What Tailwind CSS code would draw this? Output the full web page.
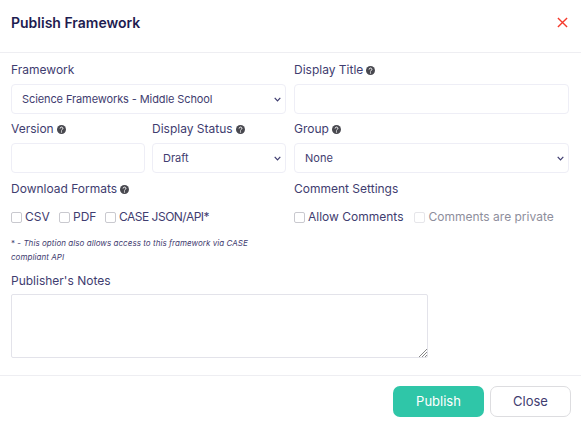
<!doctype html>
<html><head><meta charset="utf-8">
<script src="https://cdn.jsdelivr.net/npm/@tailwindcss/browser@4"></script></head>
<body class="bg-white font-['Inter',sans-serif] text-[#3f3d70] text-[12px] w-[581px] h-[422px] overflow-hidden">
<header class="h-[53px] border-b border-[#eeeef2] flex items-center justify-between pl-[11px] pr-[13px] pb-[7px]">
  <h1 class="text-[14px] font-semibold text-[#1e1c50]">Publish Framework</h1>
  <svg class="w-[11px] h-[11px]" viewBox="0 0 12 12" fill="none" stroke="#f5392b" stroke-width="1.5"><path d="M1 1l10 10M11 1L1 11"/></svg>
</header>
<main class="pl-[11px] pr-[12px] pt-[10px]">
  <div class="grid grid-cols-2 gap-x-[8px]">
    <div>
      <label class="block h-[21px] leading-[14px]">Framework</label>
      <div class="relative h-[30px] border border-[#eeeef6] rounded-[4px] flex items-center pl-[10px] text-[11px] tracking-[-0.1px]">Science Frameworks - Middle School
        <svg class="absolute right-[4px] top-[12px] w-[7px] h-[5px]" viewBox="0 0 7 5" fill="none" stroke="#3f3d70" stroke-width="1.2"><path d="M.7.8l2.8 3 2.8-3"/></svg></div>
    </div>
    <div>
      <label class="flex items-center gap-[3px] h-[21px] leading-[14px] pb-[7px]">Display Title
        <svg class="w-[9px] h-[9px]" viewBox="0 0 9 9"><circle cx="4.5" cy="4.5" r="4.5" fill="#48484f"/><path d="M3.1 3.5c0-1.900 2.800-1.900 2.800-.1 0 1.200-1.400 1-1.400 2.100" fill="none" stroke="#fff" stroke-width="1"/><circle cx="4.5" cy="6.900" r=".6" fill="#fff"/></svg></label>
      <div class="h-[30px] border border-[#eeeef6] rounded-[4px]"></div>
    </div>
    <div class="grid grid-cols-2 gap-x-[7px] mt-[8px]">
      <div>
        <label class="flex items-center gap-[3px] h-[21px] leading-[14px] pb-[7px]">Version
          <svg class="w-[9px] h-[9px]" viewBox="0 0 9 9"><circle cx="4.5" cy="4.5" r="4.5" fill="#48484f"/><path d="M3.1 3.500c0-1.900 2.800-1.900 2.800-.1 0 1.200-1.400 1-1.400 2.100" fill="none" stroke="#fff" stroke-width="1"/><circle cx="4.500" cy="6.900" r=".6" fill="#fff"/></svg></label>
        <div class="h-[30px] border border-[#eeeef6] rounded-[4px]"></div>
      </div>
      <div>
        <label class="flex items-center gap-[3px] h-[21px] leading-[14px] pb-[7px]">Display Status
          <svg class="w-[9px] h-[9px]" viewBox="0 0 9 9"><circle cx="4.5" cy="4.5" r="4.5" fill="#48484f"/><path d="M3.1 3.500c0-1.900 2.800-1.900 2.800-.1 0 1.200-1.400 1-1.400 2.100" fill="none" stroke="#fff" stroke-width="1"/><circle cx="4.500" cy="6.900" r=".6" fill="#fff"/></svg></label>
        <div class="relative h-[30px] border border-[#eeeef6] rounded-[4px] flex items-center pl-[10px] text-[11px]">Draft
          <svg class="absolute right-[4px] top-[12px] w-[7px] h-[5px]" viewBox="0 0 7 5" fill="none" stroke="#3f3d70" stroke-width="1.2"><path d="M.7.8l2.800 3 2.800-3"/></svg></div>
      </div>
    </div>
    <div class="mt-[8px]">
      <label class="flex items-center gap-[3px] h-[21px] leading-[14px] pb-[7px]">Group
        <svg class="w-[9px] h-[9px]" viewBox="0 0 9 9"><circle cx="4.5" cy="4.5" r="4.5" fill="#48484f"/><path d="M3.1 3.500c0-1.900 2.800-1.900 2.800-.1 0 1.200-1.400 1-1.400 2.100" fill="none" stroke="#fff" stroke-width="1"/><circle cx="4.500" cy="6.900" r=".6" fill="#fff"/></svg></label>
      <div class="relative h-[30px] border border-[#eeeef6] rounded-[4px] flex items-center pl-[10px] text-[11px]">None
        <svg class="absolute right-[4px] top-[12px] w-[7px] h-[5px]" viewBox="0 0 7 5" fill="none" stroke="#3f3d70" stroke-width="1.2"><path d="M.7.8l2.800 3 2.800-3"/></svg></div>
    </div>
    <div class="mt-[9px]">
      <label class="flex items-center gap-[3px] h-[14px] leading-[14px]">Download Formats
        <svg class="w-[9px] h-[9px]" viewBox="0 0 9 9"><circle cx="4.5" cy="4.500" r="4.5" fill="#48484f"/><path d="M3.1 3.500c0-1.900 2.800-1.900 2.800-.1 0 1.200-1.400 1-1.400 2.100" fill="none" stroke="#fff" stroke-width="1"/><circle cx="4.500" cy="6.900" r=".6" fill="#fff"/></svg></label>
      <div class="flex items-center mt-[14px] h-[14px]">
        <span class="w-[11px] h-[11px] border border-[#c9c9cf] rounded-[2px] mr-[3px]"></span><span class="mr-[13px] w-[21px]">CSV</span>
        <span class="w-[11px] h-[11px] border border-[#c9c9cf] rounded-[2px] mr-[3px]"></span><span class="mr-[12px] w-[20px]">PDF</span>
        <span class="w-[11px] h-[11px] border border-[#c9c9cf] rounded-[2px] mr-[3px]"></span><span class="tracking-[-0.5px] whitespace-nowrap">CASE JSON/API*</span>
      </div>
    </div>
    <div class="mt-[9px]">
      <label class="block h-[14px] leading-[14px]">Comment Settings</label>
      <div class="flex items-center mt-[14px] h-[14px]">
        <span class="w-[11px] h-[11px] border border-[#c9c9cf] rounded-[2px] mr-[3px]"></span><span class="mr-[11px]">Allow Comments</span>
        <span class="w-[11px] h-[11px] border border-[#e6e6ea] rounded-[2px] mr-[3px]"></span><span class="text-[#8e8e9c]">Comments are private</span>
      </div>
    </div>
  </div>
  <p class="mt-[12px] text-[8px] leading-[14px] w-[265px] tracking-[0.05px]">* - <i>This option also allows access to this framework via CASE compliant API</i></p>
  <label class="block mt-[10px] h-[14px] leading-[14px]">Publisher's Notes</label>
  <div class="relative mt-[6px] w-[417px] h-[64px] border border-[#e3e3ea] rounded-[2px]">
    <svg class="absolute right-0 bottom-0 w-[8px] h-[8px]" viewBox="0 0 8 8" stroke="#888" stroke-width="1"><path d="M0 8L8 0M3 8l5-5M6 8l2-2"/></svg>
  </div>
</main>
<footer class="mt-[17px] h-[47px] border-t border-[#eeeef2] flex justify-end gap-[6px] pt-[10px] pr-[10px]">
  <button class="w-[91px] h-[31px] bg-[#2fc6a8] text-white rounded-[7px] text-[13px]">Publish</button>
  <button class="w-[81px] h-[31px] border border-[#dddde0] text-[#3f3d70] rounded-[7px] text-[13px]">Close</button>
</footer>
</body></html>
